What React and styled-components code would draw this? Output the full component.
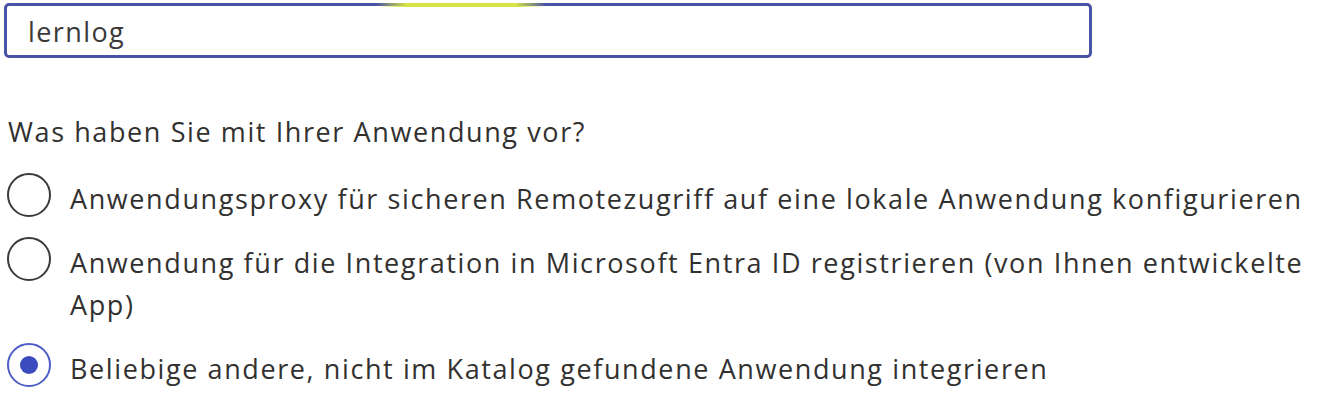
import React from "react";
import styled, { createGlobalStyle } from "styled-components";

const Global = createGlobalStyle`
  html, body { margin: 0; padding: 0; background: #ffffff; }
  body { font-family: "Open Sans", "Noto Sans", sans-serif; color: #323130; }
`;

const Page = styled.div`
  width: 1336px;
  height: 414px;
  padding: 3px 0 0 4px;
  box-sizing: border-box;
  overflow: hidden;
`;

const InputWrap = styled.div`
  position: relative;
  width: 1088px;
`;

const TextBox = styled.div`
  box-sizing: border-box;
  height: 55px;
  border: 3px solid #4853a8;
  border-radius: 5px;
  padding: 1px 0 0 21px;
  display: flex;
  align-items: center;
  font-size: 27px;
  letter-spacing: 1.4px;
  color: #3b3a39;
`;

const Glow = styled.div`
  position: absolute;
  top: 0;
  left: 372px;
  width: 170px;
  height: 4px;
  background: linear-gradient(90deg, rgba(214,230,70,0) 0%, #d6e445 18%, #d6e445 82%, rgba(214,230,70,0) 100%);
`;

const Question = styled.div`
  margin: 53px 0 0 4px;
  font-size: 27px;
  letter-spacing: 1.6px;
  line-height: 42px;
`;

const Options = styled.div`
  margin: 25px 0 0 3px;
  display: flex;
  flex-direction: column;
  gap: 22px;
`;

const Option = styled.label`
  display: flex;
  align-items: flex-start;
  gap: 19px;
`;

const Circle = styled.span`
  flex: none;
  box-sizing: border-box;
  width: 44px;
  height: 44px;
  margin-top: -5px;
  border-radius: 50%;
  border: 2px solid ${(p) => (p.$checked ? "#4d5ec4" : "#3a3a3a")};
  display: flex;
  align-items: center;
  justify-content: center;
  &::after {
    content: "";
    display: ${(p) => (p.$checked ? "block" : "none")};
    width: 18px;
    height: 18px;
    border-radius: 50%;
    background: #3b4cbf;
  }
`;

const Label = styled.span`
  font-size: 27px;
  letter-spacing: 1.6px;
  line-height: 42px;
  max-width: 1245px;
`;

const options = [
  { text: "Anwendungsproxy für sicheren Remotezugriff auf eine lokale Anwendung konfigurieren", checked: false },
  { text: "Anwendung für die Integration in Microsoft Entra ID registrieren (von Ihnen entwickelte App)", checked: false },
  { text: "Beliebige andere, nicht im Katalog gefundene Anwendung integrieren", checked: true },
];

export default function App() {
  return (
    <Page>
      <Global />
      <InputWrap>
        <TextBox>lernlog</TextBox>
        <Glow />
      </InputWrap>
      <Question>Was haben Sie mit Ihrer Anwendung vor?</Question>
      <Options>
        {options.map((o) => (
          <Option key={o.text}>
            <Circle $checked={o.checked} />
            <Label>{o.text}</Label>
          </Option>
        ))}
      </Options>
    </Page>
  );
}
